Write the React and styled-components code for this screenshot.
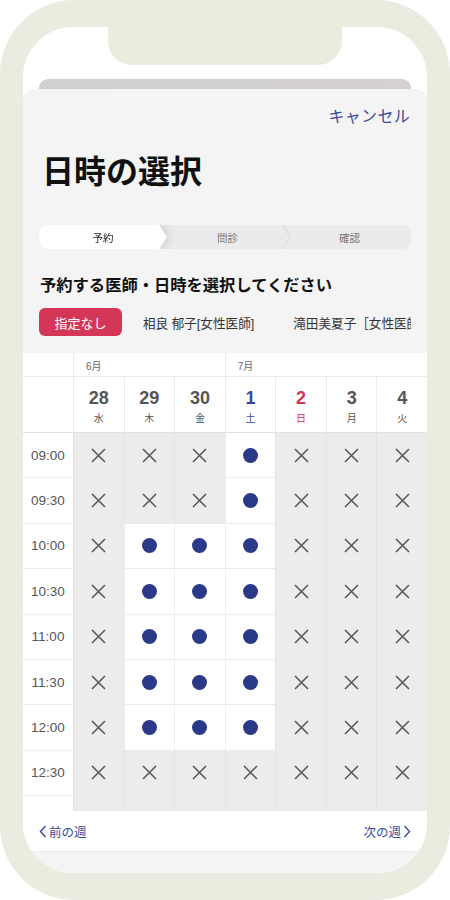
import React from 'react'
import styled, { createGlobalStyle } from 'styled-components'

const GlobalStyle = createGlobalStyle`
  html, body {
    margin: 0;
    padding: 0;
    background: #ffffff;
  }
  body {
    font-family: "Liberation Sans", "Noto Sans CJK JP", sans-serif;
    color: #222;
  }
  * {
    box-sizing: border-box;
  }
`

const blue = '#3a4a9b'
const dotBlue = '#2b3a88'
const red = '#d33657'

const days = [
  { d: 28, w: '水' },
  { d: 29, w: '木' },
  { d: 30, w: '金' },
  { d: 1, w: '土', tone: 'sat' },
  { d: 2, w: '日', tone: 'sun' },
  { d: 3, w: '月' },
  { d: 4, w: '火' },
]

const times = ['09:00', '09:30', '10:00', '10:30', '11:00', '11:30', '12:00', '12:30', '13:00']

// which day columns are open for each time row
const openSlots = [[3], [3], [1, 2, 3], [1, 2, 3], [1, 2, 3], [1, 2, 3], [1, 2, 3], [], []]

const toneColor = (tone) => (tone === 'sat' ? blue : tone === 'sun' ? red : '#555')

const Frame = styled.div`
  width: 450px;
  height: 900px;
  background: #ecebdf;
  border-radius: 74px;
  padding: 27px 23px;
`

const Screen = styled.div`
  height: 100%;
  background: #fff;
  border-radius: 50px;
  overflow: hidden;
  display: flex;
  flex-direction: column;
  align-items: stretch;
`

const Notch = styled.div`
  align-self: center;
  width: 234px;
  height: 38px;
  background: #ecebdf;
  border-radius: 0 0 24px 24px;
  flex-shrink: 0;
`

const BackCard = styled.div`
  margin: 14px 16px 0;
  height: 10px;
  border-radius: 9px 9px 0 0;
  background: linear-gradient(90deg, #d1cfd1, #d4d0d3);
  flex-shrink: 0;
`

const Sheet = styled.div`
  flex: 1;
  background: #f4f4f4;
  border-radius: 12px 12px 0 0;
  display: flex;
  flex-direction: column;
  overflow: hidden;
`

const CancelRow = styled.div`
  display: flex;
  justify-content: flex-end;
  padding: 18px 17px 0;
`

const CancelLink = styled.span`
  font-size: 16px;
  line-height: 20px;
  color: ${blue};
  letter-spacing: 0.3px;
`

const Title = styled.h1`
  margin: 25px 0 0 19px;
  font-size: 32px;
  line-height: 40px;
  font-weight: 700;
  color: #111;
`

const Steps = styled.div`
  margin: 33px 16px 0;
  height: 24px;
  border-radius: 8px;
  background: #ebebeb;
  display: grid;
  grid-template-columns: 128px 121px 1fr;
  overflow: hidden;
`

const ActiveWrap = styled.div`
  filter: drop-shadow(3px 0 5px rgba(0, 0, 0, 0.12));
  position: relative;
  z-index: 1;
`

const StepShape = styled.div`
  height: 100%;
  background: #fff;
  border-radius: 8px 0 0 8px;
  clip-path: polygon(0 0, calc(100% - 8px) 0, 100% 50%, calc(100% - 8px) 100%, 0 100%);
  display: flex;
  align-items: center;
  justify-content: center;
`

const Step = styled.div`
  position: relative;
  display: flex;
  align-items: center;
  justify-content: center;
  height: 100%;
`

const StepLabel = styled.span`
  font-size: 10.5px;
  color: ${(p) => (p.$active ? '#222' : '#777')};
`

const StepDivider = styled.svg`
  position: absolute;
  right: -3px;
  top: 0;
`

const Heading = styled.h2`
  margin: 24px 0 0 17px;
  font-size: 16.3px;
  line-height: 24px;
  font-weight: 700;
  color: #111;
`

const Tabs = styled.div`
  margin: 11px 16px 0;
  display: flex;
  align-items: center;
  gap: 21px;
  overflow: hidden;
  white-space: nowrap;
  height: 28px;
`

const Tab = styled.div`
  flex-shrink: 0;
  height: 28px;
  display: flex;
  align-items: center;
  justify-content: center;
  font-size: ${(p) => (p.$active ? '13px' : '12.6px')};
  color: ${(p) => (p.$active ? '#fff' : '#333')};
  background: ${(p) => (p.$active ? red : 'transparent')};
  border-radius: 6px;
  width: ${(p) => (p.$active ? '83px' : 'auto')};
  margin-right: ${(p) => (p.$gap ? '18px' : '0')};
`

const Calendar = styled.div`
  margin-top: 17px;
  height: 458px;
  background: #fff;
  overflow: hidden;
  flex-shrink: 0;
`

const Row = styled.div`
  display: grid;
  grid-template-columns: 50px repeat(7, 1fr);
  height: ${(p) => p.$h}px;
  border-bottom: 1px solid ${(p) => (p.$strong ? '#e2e2e2' : '#ebebeb')};
`

const MonthCell = styled.div`
  grid-column: span ${(p) => p.$span};
  border-left: 1px solid #ececec;
  font-size: 10px;
  color: #666;
  padding: 5px 0 0 12px;
`

const Blank = styled.div``

const DayCell = styled.div`
  border-left: 1px solid #ececec;
  display: flex;
  flex-direction: column;
  align-items: center;
  padding-top: 10px;
  color: ${(p) => toneColor(p.$tone)};
`

const DayNum = styled.span`
  font-size: 18px;
  line-height: 22px;
  font-weight: 700;
`

const DayName = styled.span`
  font-size: 10px;
  line-height: 14px;
  margin-top: 3px;
`

const TimeCell = styled.div`
  display: flex;
  align-items: center;
  justify-content: center;
  font-size: 13.5px;
  color: #555;
`

const Slot = styled.div`
  border-left: 1px solid ${(p) => (p.$open ? '#efefef' : '#e3e3e3')};
  background: ${(p) => (p.$open ? '#fff' : '#ececec')};
  display: flex;
  align-items: center;
  justify-content: center;
`

const Dot = styled.span`
  width: 15px;
  height: 15px;
  border-radius: 50%;
  background: ${dotBlue};
`

const Footer = styled.div`
  height: 41px;
  background: #fff;
  border-bottom: 1px solid #ececec;
  display: flex;
  align-items: center;
  justify-content: space-between;
  padding: 0 16px;
  flex-shrink: 0;
`

const WeekLink = styled.span`
  display: flex;
  align-items: center;
  gap: 2px;
  font-size: 12.5px;
  color: ${blue};
`

const Cross = () => (
  <svg width="15" height="15" viewBox="0 0 15 15">
    <path d="M1 1 L14 14 M14 1 L1 14" stroke="#555" strokeWidth="1.5" fill="none" />
  </svg>
)

const Chevron = ({ dir }) => (
  <svg width="8" height="13" viewBox="0 0 8 13">
    <path
      d={dir === 'left' ? 'M6.5 1 L1.5 6.5 L6.5 12' : 'M1.5 1 L6.5 6.5 L1.5 12'}
      stroke={blue}
      strokeWidth="1.4"
      fill="none"
    />
  </svg>
)

export default function App() {
  return (
    <>
      <GlobalStyle />
      <Frame>
        <Screen>
          <Notch />
          <BackCard />
          <Sheet>
            <CancelRow>
              <CancelLink>キャンセル</CancelLink>
            </CancelRow>
            <Title>日時の選択</Title>
            <Steps>
              <ActiveWrap>
                <StepShape>
                  <StepLabel $active>予約</StepLabel>
                </StepShape>
              </ActiveWrap>
              <Step>
                <StepLabel>問診</StepLabel>
                <StepDivider width="9" height="24" viewBox="0 0 9 24">
                  <path d="M1 0 L8 12 L1 24" stroke="#d9d9d9" strokeWidth="1" fill="none" />
                </StepDivider>
              </Step>
              <Step>
                <StepLabel>確認</StepLabel>
              </Step>
            </Steps>
            <Heading>予約する医師・日時を選択してください</Heading>
            <Tabs>
              <Tab $active>指定なし</Tab>
              <Tab $gap>相良 郁子[女性医師]</Tab>
              <Tab>滝田美夏子［女性医師］</Tab>
            </Tabs>
            <Calendar>
              <Row $h={24}>
                <Blank />
                <MonthCell $span={3}>6月</MonthCell>
                <MonthCell $span={4}>7月</MonthCell>
              </Row>
              <Row $h={56} $strong>
                <Blank />
                {days.map((day) => (
                  <DayCell key={day.d} $tone={day.tone}>
                    <DayNum>{day.d}</DayNum>
                    <DayName>{day.w}</DayName>
                  </DayCell>
                ))}
              </Row>
              {times.map((t, i) => (
                <Row key={t} $h={45.4}>
                  <TimeCell>{i < 8 ? t : ''}</TimeCell>
                  {days.map((day, c) => {
                    const open = openSlots[i].includes(c)
                    return (
                      <Slot key={day.d} $open={open}>
                        {i < 8 && (open ? <Dot /> : <Cross />)}
                      </Slot>
                    )
                  })}
                </Row>
              ))}
            </Calendar>
            <Footer>
              <WeekLink>
                <Chevron dir="left" />
                前の週
              </WeekLink>
              <WeekLink>
                次の週
                <Chevron dir="right" />
              </WeekLink>
            </Footer>
          </Sheet>
        </Screen>
      </Frame>
    </>
  )
}
